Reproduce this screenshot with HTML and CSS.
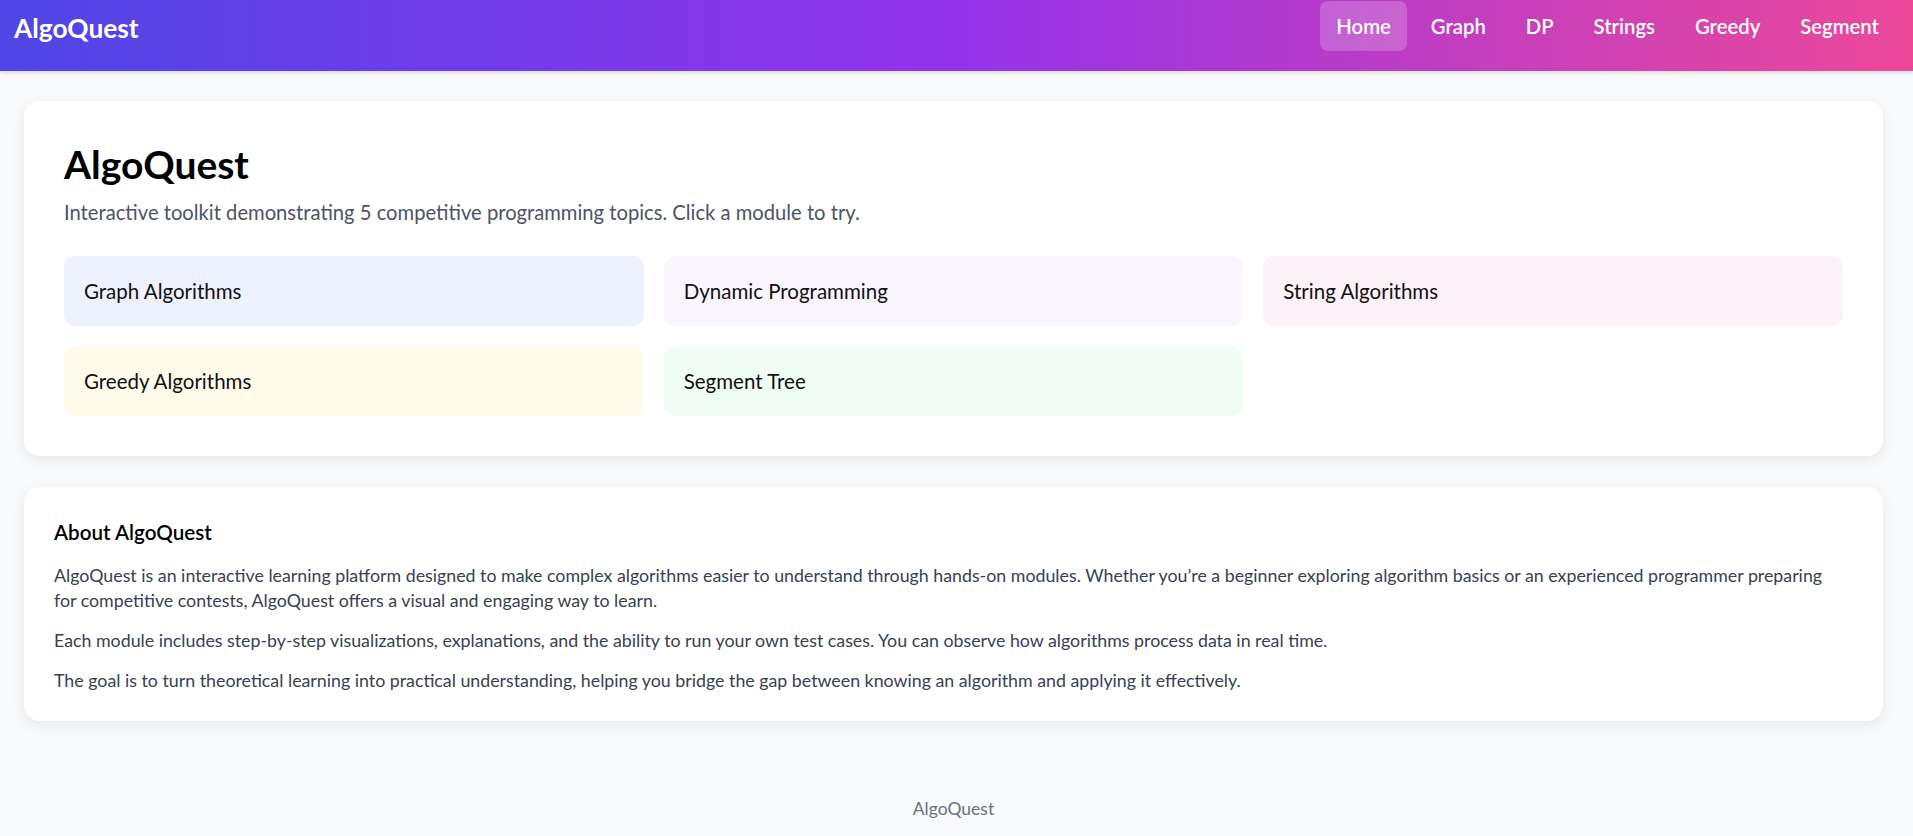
FILE: index.html
```html
<!DOCTYPE html>
<html lang="en">
<head>
<meta charset="utf-8">
<title>AlgoQuest</title>
<link rel="stylesheet" href="styles.css">
</head>
<body>
<header class="topbar">
  <div class="brand">AlgoQuest</div>
  <nav class="nav">
    <a class="nav-link active" href="#">Home</a>
    <a class="nav-link" href="#">Graph</a>
    <a class="nav-link" href="#">DP</a>
    <a class="nav-link" href="#">Strings</a>
    <a class="nav-link" href="#">Greedy</a>
    <a class="nav-link" href="#">Segment</a>
  </nav>
</header>
<main class="page">
  <section class="card hero">
    <h1 class="hero-title">AlgoQuest</h1>
    <p class="hero-sub">Interactive toolkit demonstrating 5 competitive programming topics. Click a module to try.</p>
    <div class="modules">
      <a class="tile tile-graph" href="#">Graph Algorithms</a>
      <a class="tile tile-dp" href="#">Dynamic Programming</a>
      <a class="tile tile-string" href="#">String Algorithms</a>
      <a class="tile tile-greedy" href="#">Greedy Algorithms</a>
      <a class="tile tile-seg" href="#">Segment Tree</a>
    </div>
  </section>
  <section class="card about">
    <h3 class="about-title">About AlgoQuest</h3>
    <p class="about-text">AlgoQuest is an interactive learning platform designed to make complex algorithms easier to understand through hands-on modules. Whether you’re a beginner exploring algorithm basics or an experienced programmer preparing for competitive contests, AlgoQuest offers a visual and engaging way to learn.</p>
    <p class="about-text">Each module includes step-by-step visualizations, explanations, and the ability to run your own test cases. You can observe how algorithms process data in real time.</p>
    <p class="about-text last">The goal is to turn theoretical learning into practical understanding, helping you bridge the gap between knowing an algorithm and applying it effectively.</p>
  </section>
</main>
<footer class="footer">AlgoQuest</footer>
</body>
</html>
```
FILE: styles.css
```css
* { box-sizing: border-box; }

html, body {
  margin: 0;
  padding: 0;
}

body {
  background: #f9fafb;
  font-family: Lato, "Open Sans", "Noto Sans", sans-serif;
  color: #111827;
  overflow: hidden;
}

.topbar {
  height: 71px;
  display: flex;
  justify-content: space-between;
  align-items: flex-start;
  padding: 1px 18px 0 14px;
  background: linear-gradient(90deg, #4f46e5 0%, #9333ea 50%, #ec4899 100%);
  box-shadow: 0 2px 4px rgba(0, 0, 0, 0.12);
}

.brand {
  color: #ffffff;
  font-weight: 700;
  font-size: 26.3px;
  line-height: 50px;
  padding-top: 2px;
}

.nav {
  display: flex;
  gap: 8px;
}

.nav-link {
  display: block;
  color: #ffffff;
  text-decoration: none;
  font-weight: 600;
  font-size: 20.3px;
  line-height: 26px;
  padding: 12px 16px;
  border-radius: 8px;
}

.nav-link.active {
  background: rgba(255, 255, 255, 0.2);
}

.page {
  padding: 30px 30px 0 24px;
  display: flex;
  flex-direction: column;
  gap: 31px;
}

.card {
  background: #ffffff;
  border-radius: 16px;
  box-shadow: 0 4px 14px rgba(0, 0, 0, 0.08);
}

.hero {
  padding: 40px;
}

.hero-title {
  margin: 0;
  font-size: 39px;
  line-height: 46px;
  font-weight: 700;
  color: #000000;
}

.hero-sub {
  margin: 11px 0 30px;
  font-size: 20.2px;
  line-height: 28px;
  color: #4b5563;
}

.modules {
  display: grid;
  grid-template-columns: repeat(3, 1fr);
  gap: 20px;
}

.tile {
  display: block;
  padding: 22px 20px;
  font-size: 20.5px;
  line-height: 26px;
  color: #111111;
  text-decoration: none;
  border-radius: 11px;
}

.tile-graph { background: #eef2ff; }
.tile-dp { background: #faf5ff; }
.tile-string { background: #fdf2f8; }
.tile-greedy { background: #fefbea; }
.tile-seg { background: #f0fdf4; }

.about {
  padding: 30px 36px 28px 30px;
}

.about-title {
  margin: 0 0 16px;
  font-size: 20.6px;
  line-height: 30px;
  font-weight: 600;
  color: #000000;
}

.about-text {
  margin: 0 0 15px;
  font-size: 17.8px;
  line-height: 25px;
  color: #374151;
}

.about-text.last {
  margin-bottom: 0;
}

.footer {
  margin-top: 76px;
  padding: 0 30px 0 24px;
  text-align: center;
  font-size: 17.5px;
  line-height: 24px;
  color: #6b7280;
}
```
